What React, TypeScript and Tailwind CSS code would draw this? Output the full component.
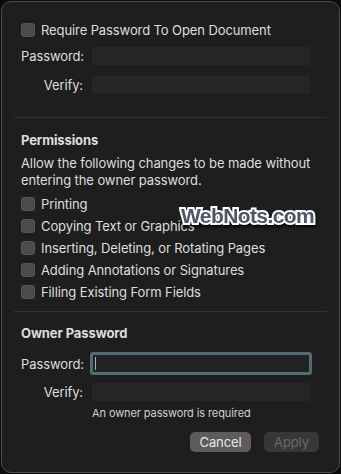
import React from "react";

const Box = () => (
    <span className="w-[14px] h-[14px] rounded-[3px] bg-[#4b4b4b] border border-[#555] shrink-0" />
);

const CheckRow = ({ label }: { label: string }) => (
    <div className="flex items-center gap-[6px] h-[22px]">
        <Box />
        <span>{label}</span>
    </div>
);

const Field = ({ label, focused }: { label: string; focused?: boolean }) => (
    <div className="flex items-center h-[18px]">
        <span className="w-[62px] text-right">{label}</span>
        {focused ? (
            <div className="ml-[7px] w-[222px] h-[23px] rounded-[3px] border-[3px] border-[#4f6c72] bg-[#232323] flex items-center pl-[2px]">
                <span className="w-px h-[13px] bg-[#9fb2b6]" />
            </div>
        ) : (
            <div className="ml-[9px] w-[218px] h-[18px] bg-[#262626]" />
        )}
    </div>
);

const App = () => {
    const perms = [
        "Printing",
        "Copying Text or Graphics",
        "Inserting, Deleting, or Rotating Pages",
        "Adding Annotations or Signatures",
        "Filling Existing Form Fields",
    ];

    return (
        <div className="w-[341px] h-[474px] bg-[#0c0c0c] p-px">
            <div
                className="relative h-full rounded-[10px] border border-[#4d4d4d] bg-[#1e1e1e] text-[#dedede] text-[13px] leading-[16px] tracking-[-0.1px] px-[19px]"
                style={{ fontFamily: "Inter, 'Liberation Sans', sans-serif" }}
            >
                {/* top: open password */}
                <div className="pt-[17px] flex flex-col">
                    <CheckRow label="Require Password To Open Document" />
                    <div className="mt-[6px] flex flex-col gap-[11px]">
                        <Field label="Password:" />
                        <Field label="Verify:" />
                    </div>
                </div>
                <div className="mt-[23px] -mx-[7px] h-px bg-[#333]" />

                {/* permissions */}
                <div className="pt-[14px]">
                    <div className="font-bold">Permissions</div>
                    <p className="mt-[7px] leading-[17px]">
                        Allow the following changes to be made without
                        <br />
                        entering the owner password.
                    </p>
                    <div className="mt-[4px] flex flex-col">
                        {perms.map((p) => (
                            <CheckRow key={p} label={p} />
                        ))}
                    </div>
                </div>
                <div className="mt-[8px] -mx-[7px] h-px bg-[#333]" />

                {/* owner password */}
                <div className="pt-[13px]">
                    <div className="font-bold">Owner Password</div>
                    <div className="mt-[11px] flex flex-col">
                        <div className="h-[23px] flex items-center">
                            <Field label="Password:" focused />
                        </div>
                        <div className="mt-[8px]">
                            <Field label="Verify:" />
                        </div>
                    </div>
                    <div className="mt-[5px] ml-[71px] text-[11px] leading-[14px] text-[#d0d0d0]">
                        An owner password is required
                    </div>
                    <div className="mt-[12px] flex justify-end gap-[13px] pr-[1px]">
                        <button className="w-[61px] h-[20px] rounded-[5px] bg-[#5c5c5c] text-[#e6e6e6]">Cancel</button>
                        <button className="w-[55px] h-[20px] rounded-[5px] bg-[#373737] text-[#6a6a6a]">Apply</button>
                    </div>
                </div>

                {/* watermark */}
                <div
                    className="absolute left-[179px] top-[202px] text-[21px] leading-[24px] font-bold text-[#4b5866] [paint-order:stroke_fill] [-webkit-text-stroke:4px_#ffffff] drop-shadow-[1px_2px_1px_rgba(0,0,0,0.8)] tracking-[-0.6px]"
                    style={{ fontFamily: "'Liberation Sans', Arial, sans-serif" }}
                >
                    WebNots.com
                </div>
            </div>
        </div>
    );
};

export default App;
